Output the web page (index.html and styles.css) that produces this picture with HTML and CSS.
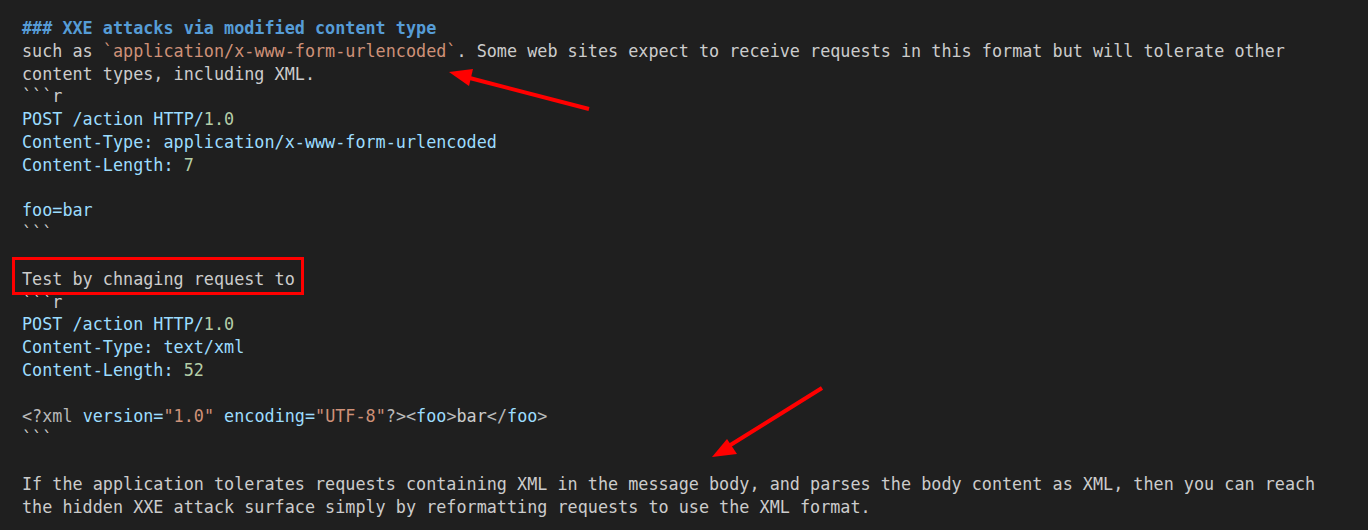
FILE: index.html
```
<!DOCTYPE html>
<html>
<head>
<meta charset="utf-8">
<link rel="stylesheet" href="styles.css">
</head>
<body>
<div class="editor">
  <div class="code">
    <div class="ln"><span class="h">### XXE attacks via modified content type</span></div>
    <div class="ln">such as <span class="ic">`application/x-www-form-urlencoded`</span>. Some web sites expect to receive requests in this format but will tolerate other</div>
    <div class="ln">content types, including XML.</div>
    <div class="ln"><span class="fence">```</span>r</div>
    <div class="ln"><span class="k">POST /action HTTP/</span><span class="n">1.0</span></div>
    <div class="ln"><span class="k">Content-Type: application/x-www-form-urlencoded</span></div>
    <div class="ln"><span class="k">Content-Length: </span><span class="n">7</span></div>
    <div class="ln"> </div>
    <div class="ln"><span class="k">foo=bar</span></div>
    <div class="ln"><span class="fence">```</span></div>
    <div class="ln"> </div>
    <div class="ln">Test by chnaging request to</div>
    <div class="ln"><span class="fence">```</span>r</div>
    <div class="ln"><span class="k">POST /action HTTP/</span><span class="n">1.0</span></div>
    <div class="ln"><span class="k">Content-Type: text/xml</span></div>
    <div class="ln"><span class="k">Content-Length: </span><span class="n">52</span></div>
    <div class="ln"> </div>
    <div class="ln"><span class="p">&lt;?xml</span> <span class="k">version=</span><span class="ic">"1.0"</span> <span class="k">encoding=</span><span class="ic">"UTF-8"</span><span class="p">?&gt;&lt;</span><span class="t">foo</span><span class="p">&gt;</span>bar<span class="p">&lt;/</span><span class="t">foo</span><span class="p">&gt;</span></div>
    <div class="ln"><span class="fence">```</span></div>
    <div class="ln"> </div>
    <div class="ln">If the application tolerates requests containing XML in the message body, and parses the body content as XML, then you can reach</div>
    <div class="ln">the hidden XXE attack surface simply by reformatting requests to use the XML format.</div>
  </div>
  <svg class="marks" width="1368" height="530" viewBox="0 0 1368 530">
    <line x1="589" y1="109" x2="462" y2="76" stroke="#ff0000" stroke-width="4"/>
    <polygon points="449,72 473,69 469,86" fill="#ff0000"/>
    <line x1="822" y1="388" x2="724" y2="449" stroke="#ff0000" stroke-width="4"/>
    <polygon points="712,457 727,439 737,454" fill="#ff0000"/>
    <rect x="13.5" y="258.5" width="289" height="35" fill="none" stroke="#ff0000" stroke-width="3"/>
  </svg>
</div>
</body>
</html>
```
FILE: styles.css
```
html, body {
  margin: 0;
  padding: 0;
  background: #1f1f1f;
}
.editor {
  position: relative;
  width: 1368px;
  height: 530px;
  overflow: hidden;
  background: #1f1f1f;
}
.code {
  padding: 17px 0 0 22px;
  font-family: "DejaVu Sans Mono", monospace;
  font-size: 16.8px;
  line-height: 22.8px;
  color: #cccccc;
}
.ln {
  white-space: pre;
  height: 22.8px;
}
.h {
  color: #569cd6;
  font-weight: bold;
}
.ic {
  color: #ce9178;
}
.k {
  color: #9cdcfe;
}
.n {
  color: #b5cea8;
}
.p {
  color: #b8b8b8;
}
.t {
  color: #9cdcfe;
}
.fence {
  color: #cccccc;
}
.marks {
  position: absolute;
  left: 0;
  top: 0;
}
```
